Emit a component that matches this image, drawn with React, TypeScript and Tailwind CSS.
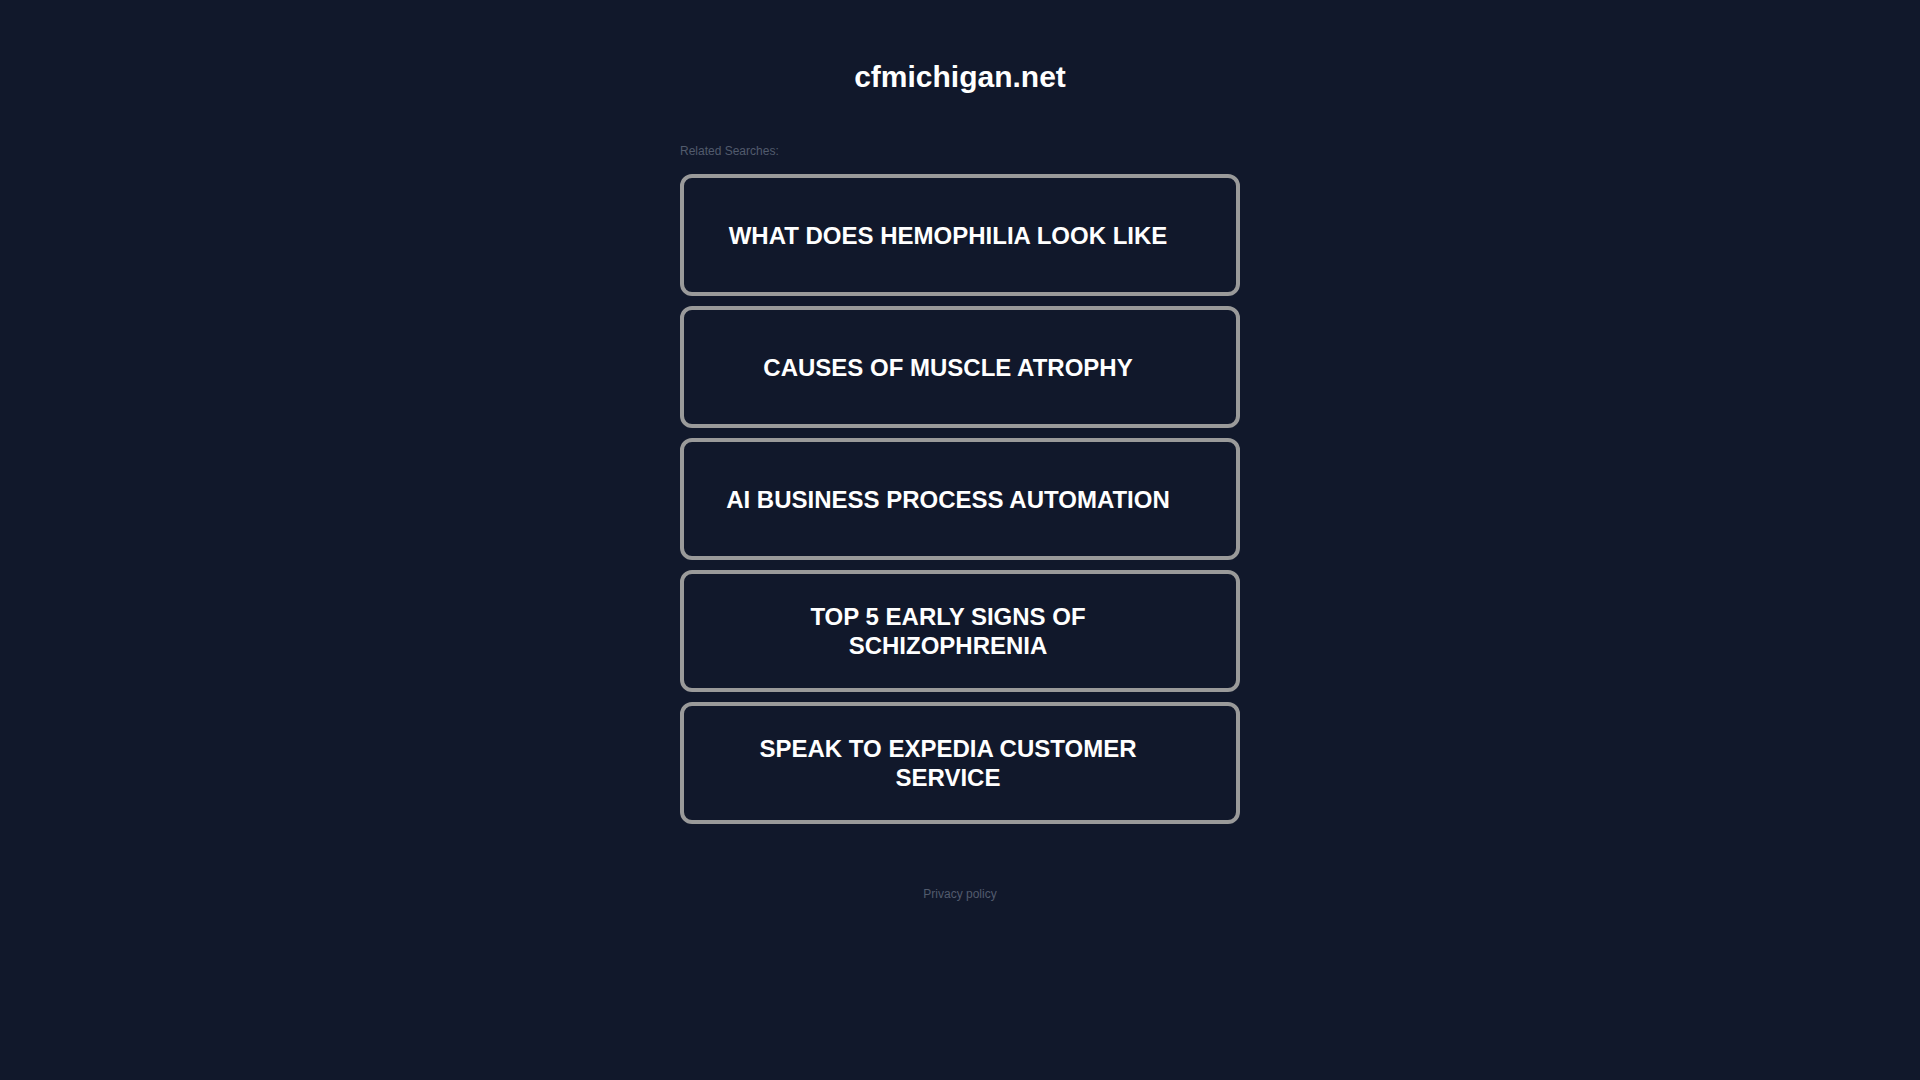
const searches = [
  "WHAT DOES HEMOPHILIA LOOK LIKE",
  "CAUSES OF MUSCLE ATROPHY",
  "AI BUSINESS PROCESS AUTOMATION",
  "TOP 5 EARLY SIGNS OF SCHIZOPHRENIA",
  "SPEAK TO EXPEDIA CUSTOMER SERVICE",
]

export default function App() {
  return (
    <div className="min-h-screen bg-[#11182b] font-['Liberation_Sans',Arial,sans-serif] text-white">
      <div className="mx-auto flex w-[560px] flex-col pt-[59px]">
        <h1 className="text-center text-[30px] font-bold leading-[36px]">cfmichigan.net</h1>

        <div className="mt-[49px] text-[12px] leading-[14px] text-[#525b6d]">Related Searches:</div>

        {/* search links */}
        <div className="mt-[16px] flex flex-col gap-[10px]">
          {searches.map((s) => (
            <a
              key={s}
              href="#"
              className="flex h-[122px] items-center justify-center rounded-[12px] border-4 border-[#9a9a9a] pl-[40px] pr-[64px] text-center text-[24px] font-bold leading-[29px] text-white"
            >
              {s}
            </a>
          ))}
        </div>

        <div className="mt-[63px] text-center text-[12px] leading-[14px] text-[#525b6d]">Privacy policy</div>
      </div>
    </div>
  )
}
